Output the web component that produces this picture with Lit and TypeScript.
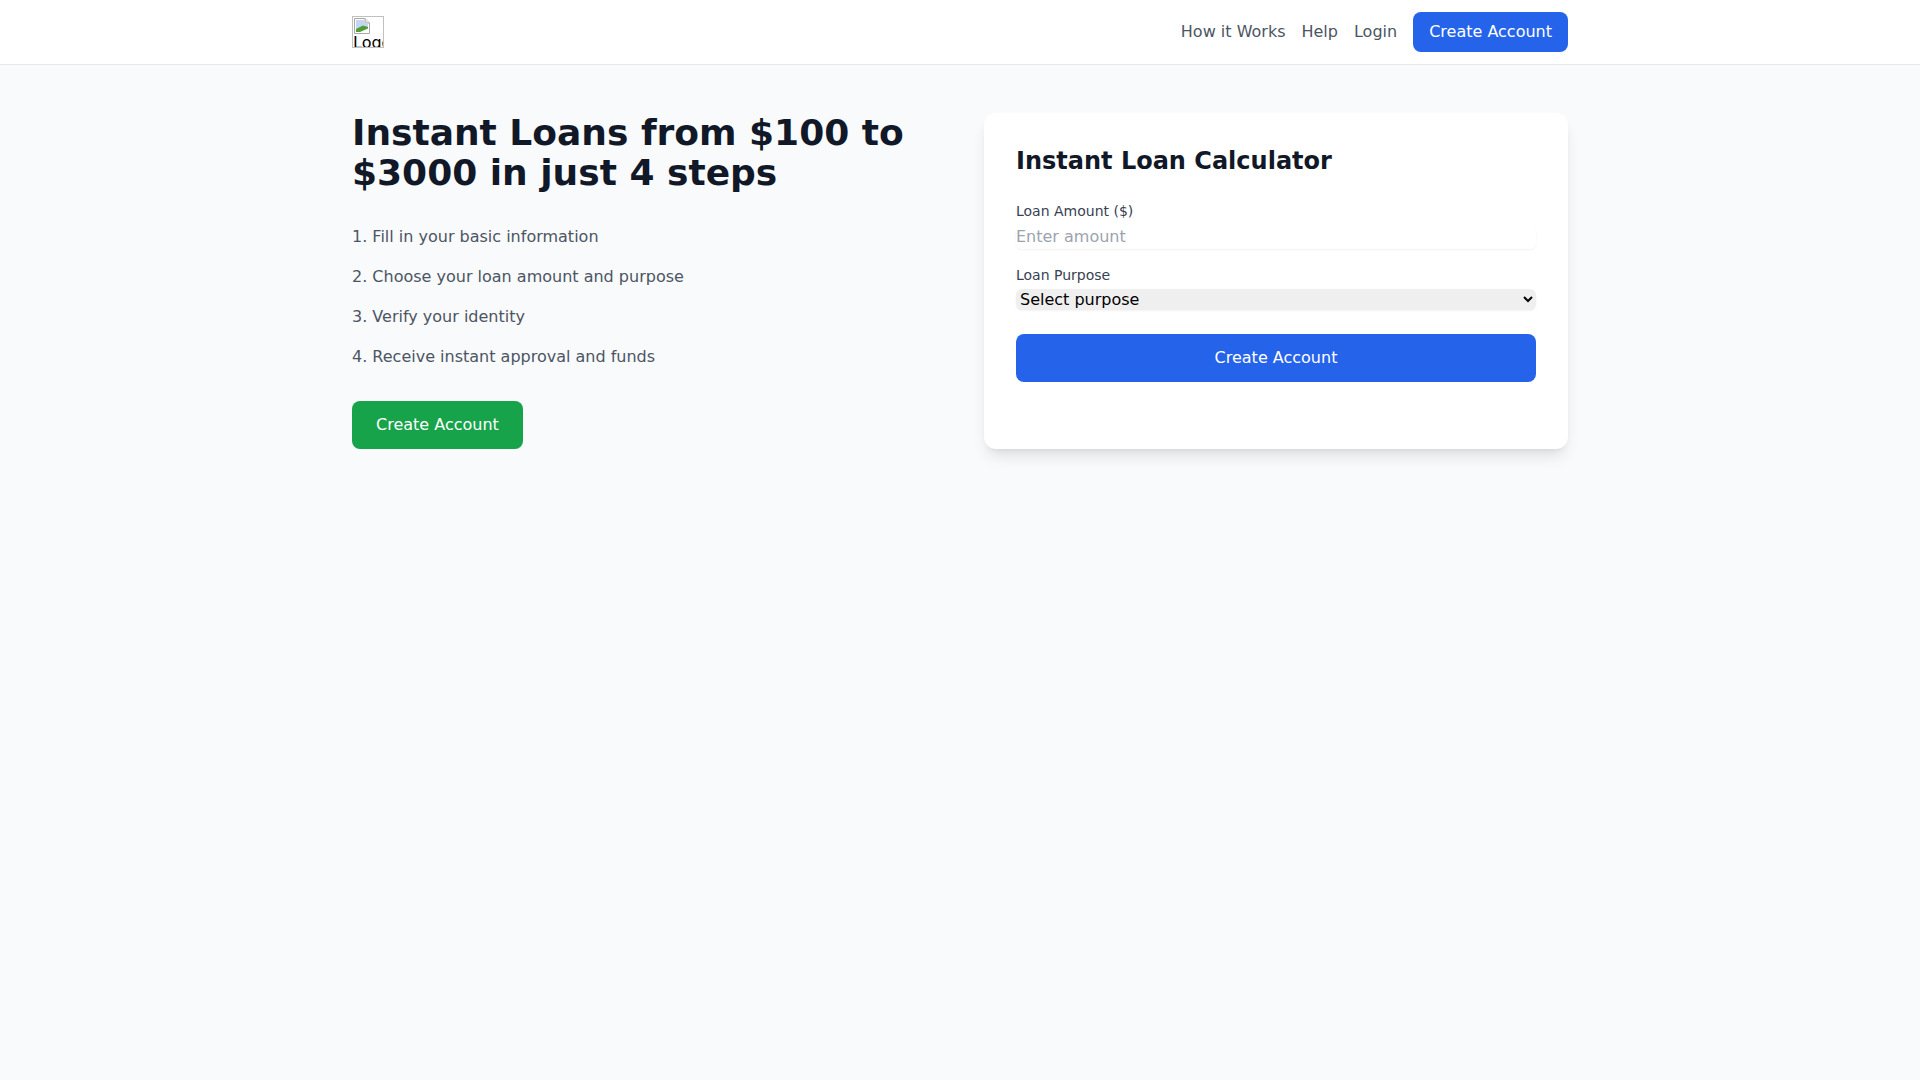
import { LitElement, html, css } from 'lit';
import { customElement } from 'lit/decorators.js';

@customElement('app-root')
export class AppRoot extends LitElement {
  static styles = css`
    :host {
      display: block;
      min-height: 1080px;
      background: #f9fafb;
      font-family: 'DejaVu Sans', sans-serif;
      font-size: 16px;
      line-height: 24px;
      color: #111827;
    }
    * {
      box-sizing: border-box;
    }
    header {
      background: #fff;
      border-bottom: 1px solid #e5e7eb;
    }
    .wrap {
      width: 1216px;
      margin: 0 auto;
    }
    .bar {
      height: 64px;
      display: flex;
      align-items: center;
      justify-content: space-between;
    }
    .logo {
      display: block;
      width: 32px;
      height: 32px;
      overflow: hidden;
      border: 1px solid #c0c0c0;
      color: #000;
      font-size: 16px;
      line-height: 18px;
    }
    .logo svg {
      display: block;
      margin: 1px 0 0 1px;
    }
    .logo span {
      display: block;
      white-space: nowrap;
    }
    nav {
      display: flex;
      align-items: center;
      gap: 16px;
    }
    nav a {
      color: #4b5563;
      text-decoration: none;
    }
    .btn {
      display: block;
      border: 0;
      color: #fff;
      font: inherit;
      text-align: center;
      border-radius: 8px;
      background: #2563eb;
    }
    nav .btn {
      color: #fff;
      padding: 8px 16px;
    }
    main {
      padding: 48px 0;
    }
    .hero {
      display: grid;
      grid-template-columns: 1fr 1fr;
      gap: 48px;
    }
    h1 {
      margin: 0 0 32px;
      font-size: 36px;
      line-height: 40px;
      font-weight: 700;
    }
    ol {
      margin: 0 0 32px;
      padding: 0;
      list-style: none;
      display: flex;
      flex-direction: column;
      gap: 16px;
      color: #4b5563;
    }
    .green {
      display: inline-block;
      background: #16a34a;
      padding: 12px 24px;
    }
    .card {
      background: #fff;
      border-radius: 12px;
      padding: 32px;
      box-shadow: 0 10px 15px -3px rgba(0, 0, 0, 0.1), 0 4px 6px -4px rgba(0, 0, 0, 0.1);
    }
    h2 {
      margin: 0 0 24px;
      font-size: 24px;
      line-height: 32px;
      font-weight: 700;
    }
    label {
      display: block;
      margin-bottom: 4px;
      font-size: 14px;
      line-height: 20px;
      color: #374151;
    }
    .field {
      margin-bottom: 16px;
    }
    .field.last {
      margin-bottom: 24px;
    }
    input {
      display: block;
      width: 100%;
      height: 24px;
      padding: 0;
      border: 0;
      outline: 0;
      background: #fff;
      border-radius: 6px;
      font: inherit;
      box-shadow: 0 1px 2px rgba(0, 0, 0, 0.05);
    }
    input::placeholder {
      color: #9ca3af;
      opacity: 1;
    }
    select {
      display: block;
      width: 100%;
      height: 21px;
      border: 0;
      background-color: #efefef;
      border-radius: 6px;
      color: #000;
      font-family: inherit;
      font-size: 16px;
      box-shadow: 0 1px 2px rgba(0, 0, 0, 0.05);
    }
    .full {
      width: 100%;
      padding: 12px 24px;
    }
  `;

  render() {
    return html`
      <header>
        <div class="wrap bar">
          <a class="logo">
            <svg width="16" height="16" viewBox="0 0 16 16">
              <path d="M.5 .5H11L15.5 5V15.5H.5Z" fill="#fff" stroke="#a8a8a8" />
              <path d="M11 .5V5H15.5" fill="#e8e8e8" stroke="#a8a8a8" />
              <path d="M2 2H10.5V5.5H14V14H2Z" fill="#c3d6f3" />
              <path d="M2 14V11L9 7.5L14 9V14Z" fill="#4f9e33" />
              <path d="M6 14L14 10.5V14Z" fill="#fff" />
            </svg>
            <span>Logo</span>
          </a>
          <nav>
            <a href="#">How it Works</a>
            <a href="#">Help</a>
            <a href="#">Login</a>
            <a class="btn" href="#">Create Account</a>
          </nav>
        </div>
      </header>
      <main class="wrap hero">
        <section>
          <h1>Instant Loans from $100 to $3000 in just 4 steps</h1>
          <ol>
            <li>1. Fill in your basic information</li>
            <li>2. Choose your loan amount and purpose</li>
            <li>3. Verify your identity</li>
            <li>4. Receive instant approval and funds</li>
          </ol>
          <button class="btn green">Create Account</button>
        </section>
        <section class="card">
          <h2>Instant Loan Calculator</h2>
          <div class="field">
            <label for="amount">Loan Amount ($)</label>
            <input id="amount" type="number" placeholder="Enter amount" />
          </div>
          <div class="field last">
            <label for="purpose">Loan Purpose</label>
            <select id="purpose">
              <option>Select purpose</option>
            </select>
          </div>
          <button class="btn full">Create Account</button>
        </section>
      </main>
    `;
  }
}
